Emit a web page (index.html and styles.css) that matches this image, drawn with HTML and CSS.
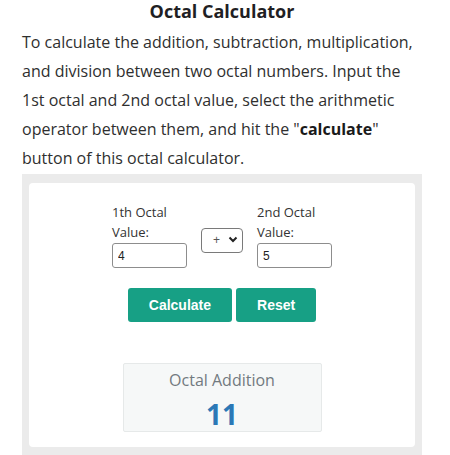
FILE: index.html
```html
<!DOCTYPE html>
<html lang="en">
<head>
<meta charset="utf-8">
<title>Octal Calculator</title>
<link rel="stylesheet" href="styles.css">
</head>
<body>
<main class="page">
  <h1 class="title">Octal Calculator</h1>
  <p class="intro">To calculate the addition, subtraction, multiplication, and division between two octal numbers. Input the 1st octal and 2nd octal value, select the arithmetic operator between them, and hit the "<strong>calculate</strong>" button of this octal calculator.</p>
  <section class="frame">
    <div class="card">
      <div class="form-row">
        <div class="field">
          <label class="label" for="a">1th Octal Value:</label>
          <input class="input" id="a" type="text" value="4">
        </div>
        <div class="select-wrap">
          <select class="op">
            <option>+</option>
            <option>-</option>
            <option>*</option>
            <option>/</option>
          </select>
          <svg class="chev" width="10" height="7" viewBox="0 0 10 7"><path d="M1.5 1.5 L5 5 L8.5 1.5" fill="none" stroke="#222" stroke-width="2"/></svg>
        </div>
        <div class="field">
          <label class="label" for="b">2nd Octal Value:</label>
          <input class="input" id="b" type="text" value="5">
        </div>
      </div>
      <div class="btn-row">
        <button class="btn">Calculate</button>
        <button class="btn">Reset</button>
      </div>
      <div class="result">
        <div class="result-label">Octal Addition</div>
        <div class="result-value">11</div>
      </div>
    </div>
  </section>
</main>
</body>
</html>
```
FILE: styles.css
```css
html, body {
  margin: 0;
  padding: 0;
  background: #ffffff;
}
body {
  font-family: "Open Sans", "Noto Sans", sans-serif;
  color: #2b2b2b;
}
.page {
  width: 400px;
  margin-left: 22px;
}
.title {
  margin: 0;
  font-size: 18px;
  line-height: 22px;
  font-weight: 700;
  text-align: center;
  color: #1f1f24;
}
.intro {
  margin: 6px 0 1px;
  font-size: 16px;
  line-height: 29px;
  color: #2f2f2f;
}
.intro strong {
  color: #1a1a1a;
}
.frame {
  background: #ebebeb;
  padding: 9px 7px 8px;
}
.card {
  background: #ffffff;
  border-radius: 4px;
  padding: 19px 0 15px;
  display: flex;
  flex-direction: column;
  align-items: center;
}
.form-row {
  display: flex;
  align-items: flex-start;
  gap: 14px;
}
.field {
  width: 75px;
  display: flex;
  flex-direction: column;
}
.label {
  font-size: 13px;
  line-height: 20px;
  color: #333;
}
.input {
  box-sizing: border-box;
  width: 75px;
  height: 25px;
  margin-top: 1px;
  border: 1px solid #8d8d8d;
  border-radius: 3px;
  padding: 0 5px;
  font-family: "Liberation Sans", Arial, sans-serif;
  font-size: 12px;
  color: #222;
  background: #fff;
}
.select-wrap {
  position: relative;
  margin-top: 25px;
}
.op {
  appearance: none;
  -webkit-appearance: none;
  box-sizing: border-box;
  width: 42px;
  height: 25px;
  border: 1px solid #7a7a7a;
  border-radius: 4px;
  background: #fff;
  padding: 0 0 0 11px;
  font-family: "Liberation Sans", Arial, sans-serif;
  font-size: 12px;
  color: #555;
}
.chev {
  position: absolute;
  left: 27px;
  top: 9px;
  pointer-events: none;
}
.btn-row {
  display: flex;
  gap: 4px;
  margin-top: 20px;
}
.btn {
  height: 34px;
  padding: 0 21px;
  border: none;
  border-radius: 3px;
  background: #17a085;
  color: #ffffff;
  font-family: "Liberation Sans", Arial, sans-serif;
  font-weight: 700;
  font-size: 14px;
}
.result {
  box-sizing: border-box;
  width: 199px;
  height: 69px;
  margin-top: 41px;
  border: 1px solid #e6e9e9;
  border-radius: 2px;
  background: #f6f8f8;
  text-align: center;
  padding-top: 5px;
}
.result-label {
  font-size: 16px;
  line-height: 22px;
  color: #727a80;
}
.result-value {
  margin-top: 7px;
  font-size: 28px;
  line-height: 32px;
  font-weight: 700;
  color: #2b78b6;
}
```
